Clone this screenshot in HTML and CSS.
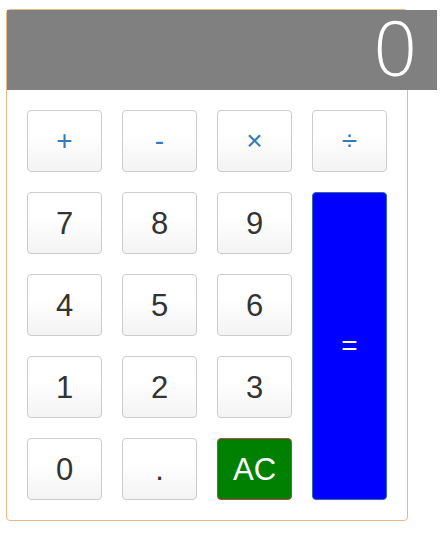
FILE: index.html
```html
<!DOCTYPE html>
<html>
<head>
<meta charset="utf-8">
<link rel="stylesheet" href="styles.css">
</head>
<body>
<div class="calc">
  <div class="display">0</div>
  <div class="keys">
    <button class="key op">+</button>
    <button class="key op">-</button>
    <button class="key op">&times;</button>
    <button class="key op">&divide;</button>
    <button class="key">7</button>
    <button class="key">8</button>
    <button class="key">9</button>
    <button class="key equals">=</button>
    <button class="key">4</button>
    <button class="key">5</button>
    <button class="key">6</button>
    <button class="key">1</button>
    <button class="key">2</button>
    <button class="key">3</button>
    <button class="key">0</button>
    <button class="key">.</button>
    <button class="key clear">AC</button>
  </div>
</div>
</body>
</html>
```
FILE: styles.css
```css
html, body {
  margin: 0;
  padding: 0;
  background: #fff;
}
body {
  padding: 9px 0 0 6px;
  font-family: "Liberation Sans", Arial, sans-serif;
}
.calc {
  width: 400px;
  border: 1px solid #e6b987;
  border-radius: 4px;
  background: #fff;
}
.display {
  width: 410px;
  height: 80px;
  box-sizing: content-box;
  background: #808080;
  color: #fff;
  font-family: "Open Sans", sans-serif;
  font-weight: 300;
  font-size: 76px;
  line-height: 74px;
  text-align: right;
  padding-right: 20px;
  overflow: hidden;
}
.keys {
  display: grid;
  grid-template-columns: repeat(4, 75px);
  grid-auto-rows: 62px;
  gap: 20px;
  padding: 20px;
}
.key {
  margin: 0;
  padding: 0;
  border: 1px solid #ccc;
  border-radius: 4px;
  background: linear-gradient(to bottom, #fff 0%, #fff 40%, #f3f3f3 100%);
  color: #333;
  font-family: "Liberation Sans", Arial, sans-serif;
  font-size: 31px;
  line-height: 1;
}
.key.op {
  color: #337ab7;
  font-size: 28px;
}
.key.equals {
  grid-column: 4;
  grid-row: 2 / span 4;
  background: #0000ff;
  border-color: #2e6da4;
  color: #fff;
  font-size: 28px;
}
.key.clear {
  background: #008000;
  border-color: #b04848;
  color: #fff;
}
```
